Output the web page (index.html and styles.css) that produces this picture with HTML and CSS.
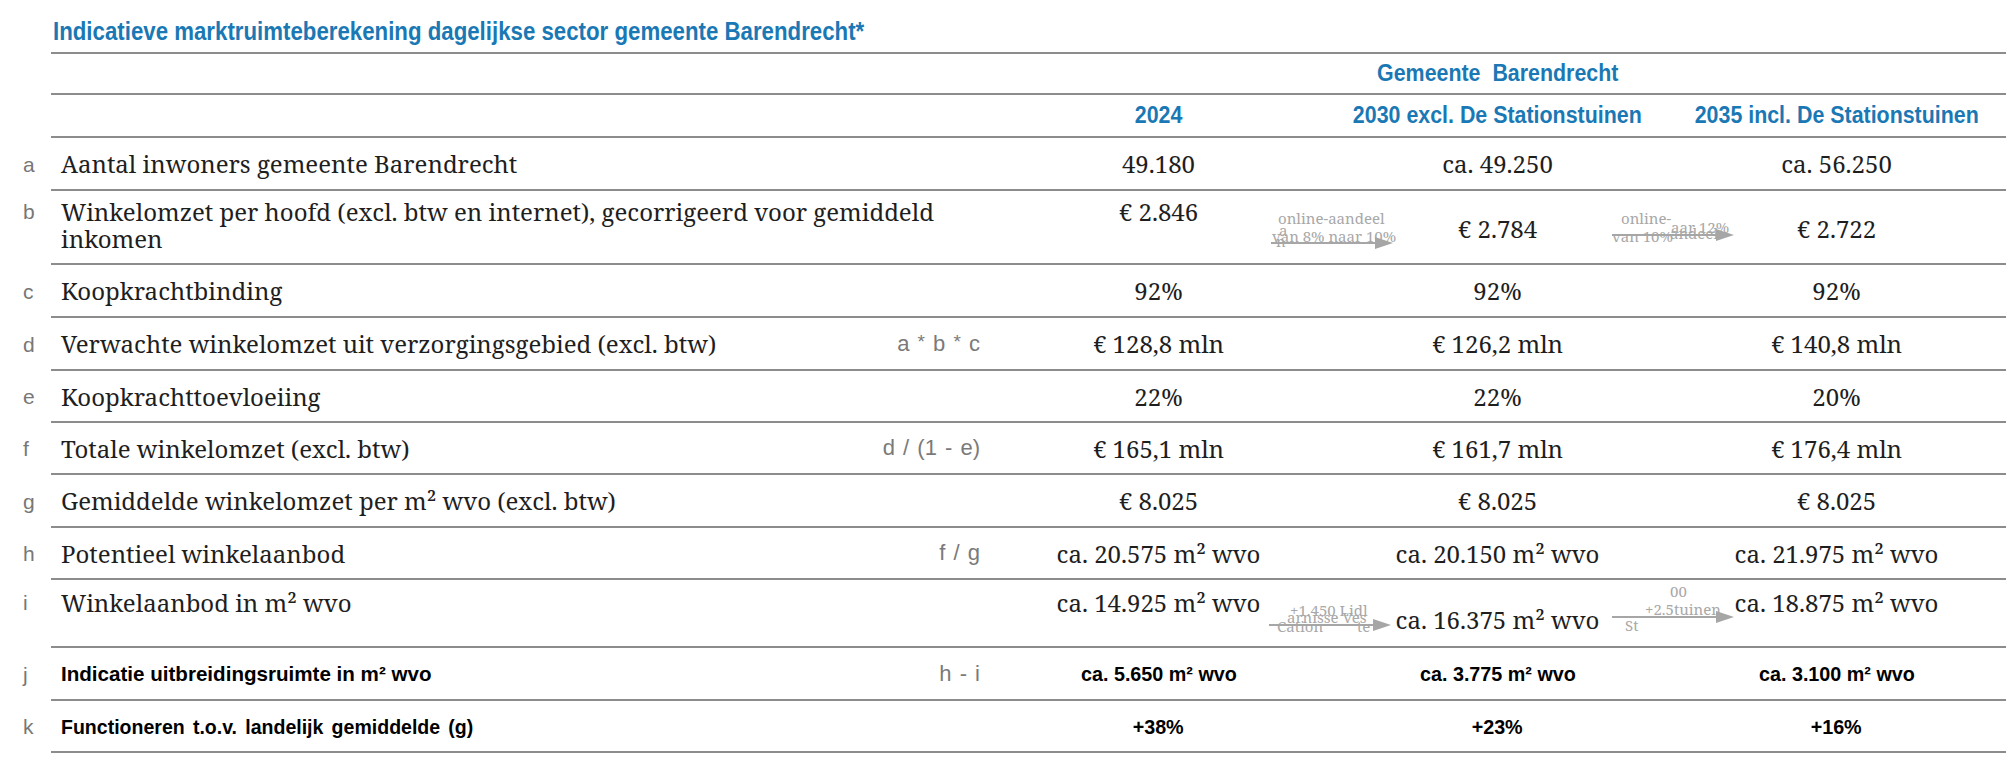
FILE: index.html
```html
<!DOCTYPE html>
<html lang="nl">
<head>
<meta charset="utf-8">
<title>Marktruimteberekening</title>
<link rel="stylesheet" href="styles.css">
</head>
<body>
<div class="page">
  <h1 class="title"><span class="sq">Indicatieve marktruimteberekening dagelijkse sector gemeente Barendrecht*</span></h1>

  <div class="row head1">
    <span class="key"></span>
    <div class="cells">
      <span class="label"></span><span class="formula"></span>
      <span class="group"><span class="sq">Gemeente&nbsp; Barendrecht</span></span>
    </div>
  </div>

  <div class="row head2">
    <span class="key"></span>
    <div class="cells">
      <span class="label"></span><span class="formula"></span>
      <span class="col year"><span class="sq">2024</span></span>
      <span class="col year"><span class="sq">2030 excl. De Stationstuinen</span></span>
      <span class="col year"><span class="sq">2035 incl. De Stationstuinen</span></span>
    </div>
  </div>

  <div class="row r53">
    <span class="key">a</span>
    <div class="cells">
      <span class="label">Aantal inwoners gemeente Barendrecht</span><span class="formula"></span>
      <span class="col">49.180</span><span class="col">ca. 49.250</span><span class="col">ca. 56.250</span>
    </div>
  </div>

  <div class="row rb">
    <span class="key">b</span>
    <div class="cells">
      <span class="label wide">Winkelomzet per hoofd (excl. btw en internet), gecorrigeerd voor gemiddeld inkomen</span>
      <span class="col">€ 2.846</span>
      <span class="col low">€ 2.784
        <span class="note note-b1">
          <span class="nt" style="left:7px;top:-26px">online-aandeel</span>
          <span class="nt" style="left:8px;top:-14px">a</span>
          <span class="nt" style="left:5px;top:-3px">n</span>
          <span class="nt" style="left:1px;top:-8px">van 8% naar 10%</span>
          <svg class="arrow" width="124" height="14" viewBox="0 0 124 14"><line x1="0" y1="7" x2="110" y2="7"/><polygon points="104,1 122,7 104,13"/></svg>
        </span>
      </span>
      <span class="col low">€ 2.722
        <span class="note note-b2">
          <span class="nt" style="left:9px;top:-18px">online-</span>
          <span class="nt" style="left:0;top:0">van 10%</span>
          <span class="nt" style="left:59px;top:-9px">aar 12%</span>
          <span class="nt" style="left:58px;top:-3px">andeel</span>
          <svg class="arrow" width="124" height="14" viewBox="0 0 124 14"><line x1="0" y1="7" x2="110" y2="7"/><polygon points="104,1 122,7 104,13"/></svg>
        </span>
      </span>
    </div>
  </div>

  <div class="row r53">
    <span class="key">c</span>
    <div class="cells">
      <span class="label">Koopkrachtbinding</span><span class="formula"></span>
      <span class="col">92%</span><span class="col">92%</span><span class="col">92%</span>
    </div>
  </div>

  <div class="row r53">
    <span class="key">d</span>
    <div class="cells">
      <span class="label">Verwachte winkelomzet uit verzorgingsgebied (excl. btw)</span><span class="formula">a <span class="ast">*</span> b <span class="ast">*</span> c</span>
      <span class="col">€ 128,8 mln</span><span class="col">€ 126,2 mln</span><span class="col">€ 140,8 mln</span>
    </div>
  </div>

  <div class="row r52">
    <span class="key">e</span>
    <div class="cells">
      <span class="label">Koopkrachttoevloeiing</span><span class="formula"></span>
      <span class="col">22%</span><span class="col">22%</span><span class="col">20%</span>
    </div>
  </div>

  <div class="row r52">
    <span class="key">f</span>
    <div class="cells">
      <span class="label">Totale winkelomzet (excl. btw)</span><span class="formula">d / (1 - e)</span>
      <span class="col">€ 165,1 mln</span><span class="col">€ 161,7 mln</span><span class="col">€ 176,4 mln</span>
    </div>
  </div>

  <div class="row r53">
    <span class="key">g</span>
    <div class="cells">
      <span class="label">Gemiddelde winkelomzet per m² wvo (excl. btw)</span><span class="formula"></span>
      <span class="col">€ 8.025</span><span class="col">€ 8.025</span><span class="col">€ 8.025</span>
    </div>
  </div>

  <div class="row r52">
    <span class="key">h</span>
    <div class="cells">
      <span class="label">Potentieel winkelaanbod</span><span class="formula">f / g</span>
      <span class="col">ca. 20.575 m² wvo</span><span class="col">ca. 20.150 m² wvo</span><span class="col">ca. 21.975 m² wvo</span>
    </div>
  </div>

  <div class="row ri">
    <span class="key">i</span>
    <div class="cells">
      <span class="label">Winkelaanbod in m² wvo</span><span class="formula"></span>
      <span class="col">ca. 14.925 m² wvo</span>
      <span class="col low">ca. 16.375 m² wvo
        <span class="note note-i1">
          <span class="nt" style="left:21px;top:-16px">+1.450 Lidl</span>
          <span class="nt" style="left:18px;top:-9px">arnisse Ves</span>
          <span class="nt" style="left:8px;top:0">Cation</span>
          <span class="nt" style="left:88px;top:0">te</span>
          <svg class="arrow" width="124" height="14" viewBox="0 0 124 14"><line x1="0" y1="7" x2="110" y2="7"/><polygon points="104,1 122,7 104,13"/></svg>
        </span>
      </span>
      <span class="col">ca. 18.875 m² wvo
        <span class="note note-i2">
          <span class="nt" style="left:58px;top:-27px">00</span>
          <span class="nt" style="left:33px;top:-9px">+2.5tuinen</span>
          <span class="nt" style="left:13px;top:7px">St</span>
          <svg class="arrow" width="124" height="14" viewBox="0 0 124 14"><line x1="0" y1="7" x2="110" y2="7"/><polygon points="104,1 122,7 104,13"/></svg>
        </span>
      </span>
    </div>
  </div>

  <div class="row r53 strong">
    <span class="key">j</span>
    <div class="cells">
      <span class="label"><span class="sq">Indicatie uitbreidingsruimte in m² wvo</span></span><span class="formula">h - i</span>
      <span class="col"><span class="sq">ca. 5.650 m² wvo</span></span><span class="col"><span class="sq">ca. 3.775 m² wvo</span></span><span class="col"><span class="sq">ca. 3.100 m² wvo</span></span>
    </div>
  </div>

  <div class="row r52 strong">
    <span class="key">k</span>
    <div class="cells">
      <span class="label"><span class="sq spaced">Functioneren t.o.v. landelijk gemiddelde (g)</span></span><span class="formula"></span>
      <span class="col"><span class="sq">+38%</span></span><span class="col"><span class="sq">+23%</span></span><span class="col"><span class="sq">+16%</span></span>
    </div>
  </div>
</div>
</body>
</html>
```

FILE: styles.css
```css
html, body {
  margin: 0;
  padding: 0;
  background: #ffffff;
}

.page {
  width: 2006px;
  font-family: "Noto Serif", "DejaVu Serif", serif;
  color: #1e1e1e;
}

.sq {
  display: inline-block;
  white-space: nowrap;
}

.title {
  box-sizing: border-box;
  height: 54px;
  margin: 0 0 0 51px;
  padding: 16px 0 0 2px;
  font-family: "Liberation Sans", Arial, sans-serif;
  font-weight: bold;
  font-size: 25px;
  line-height: 30px;
  color: #1a78b4;
  border-bottom: 2px solid #8c8c8c;
}

.title .sq {
  transform: scaleX(0.89);
  transform-origin: 0 50%;
}

.row {
  display: flex;
}

.key {
  box-sizing: border-box;
  width: 51px;
  flex: none;
  padding-left: 23px;
  font-family: "Liberation Sans", sans-serif;
  font-size: 21px;
  color: #777777;
  display: flex;
  align-items: center;
}

.cells {
  box-sizing: border-box;
  flex: 1;
  display: grid;
  grid-template-columns: 1fr 130px repeat(3, 339px);
  align-items: center;
  border-bottom: 2px solid #8c8c8c;
}

.head1 .cells { height: 41px; }
.head2 .cells { height: 43px; }
.r53 .cells { height: 53px; }
.r52 .cells { height: 52px; }
.rb .cells { height: 74px; align-items: start; padding-top: 7px; }
.ri .cells { height: 68px; align-items: start; padding-top: 9px; }
.rb .key { align-items: flex-start; padding-top: 9px; }
.ri .key { align-items: flex-start; padding-top: 11px; }

.label {
  padding-left: 10px;
  font-size: 24px;
  line-height: 27px;
  white-space: nowrap;
}

.label.wide {
  grid-column: 1 / span 2;
  white-space: normal;
  padding-right: 40px;
}

.formula {
  text-align: right;
  padding-right: 9px;
  font-family: "Liberation Sans", sans-serif;
  font-size: 22px;
  color: #7a7a7a;
  word-spacing: 2px;
}

.ast {
  position: relative;
  top: -3px;
  font-size: 19px;
}

.col {
  position: relative;
  text-align: center;
  font-size: 24px;
  line-height: 27px;
  white-space: nowrap;
}

.col.low { padding-top: 17px; }
.ri .col.low { padding-top: 17px; }

.group, .year {
  font-family: "Liberation Sans", Arial, sans-serif;
  font-weight: bold;
  font-size: 23px;
  color: #1a78b4;
  text-align: center;
}

.group .sq, .year .sq {
  transform: scaleX(0.93);
}

.group {
  grid-column: 3 / span 3;
}

.strong .label,
.strong .col {
  font-family: "Liberation Sans", Arial, sans-serif;
  font-weight: bold;
  font-size: 21px;
  color: #000000;
}

.strong .label .sq {
  transform: scaleX(0.98);
  transform-origin: 0 50%;
}

.strong .label .sq.spaced {
  word-spacing: 3px;
  transform: scaleX(0.93);
}

.strong .col .sq {
  transform: scaleX(0.94);
}

.note {
  position: absolute;
  width: 124px;
  height: 14px;
  font-size: 15px;
  line-height: 16px;
  color: #a8a8a8;
  text-align: left;
}

.nt {
  position: absolute;
  white-space: nowrap;
}

.arrow {
  position: absolute;
  left: 0;
  top: 0;
}

.arrow line {
  stroke: #a6a6a6;
  stroke-width: 2;
}

.arrow polygon {
  fill: #a6a6a6;
}

/* Positions relative to the data cell: col2 starts at x 1328, col3 at 1667 */
.note-b1 { left: -57px; top: 38px; }
.note-b2 { left: -55px; top: 30px; }
.note-i1 { left: -59px; top: 29px; }
.note-i2 { left: -55px; top: 21px; }
```
